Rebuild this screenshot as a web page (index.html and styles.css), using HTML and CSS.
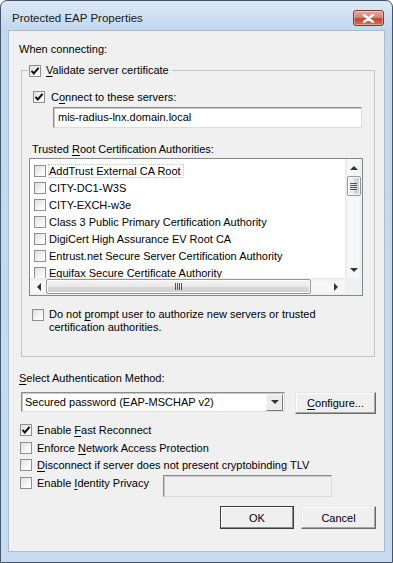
FILE: index.html
```html
<!DOCTYPE html>
<html lang="en">
<head>
  <meta charset="UTF-8" />
  <title>Protected EAP Properties</title>
  <link rel="stylesheet" href="styles.css">
</head>
<body>
  <div class="window">
    <div class="titlebar">
      <span class="title">Protected EAP Properties</span>
      <span class="close-btn">
        <svg width="13" height="9" viewBox="0 0 13 9"><path d="M2 1 L11 8 M11 1 L2 8" stroke="#fff" stroke-width="2.4" stroke-linecap="round"/></svg>
      </span>
    </div>

    <div class="client">
      <div class="line">When connecting:</div>

      <fieldset class="group">
        <legend class="group-legend">
          <span class="check"><svg width="10" height="10" viewBox="0 0 10 10"><path d="M1.5 4.8 L3.8 7.4 L8.6 1.8" fill="none" stroke="#111" stroke-width="2"/></svg></span>
          <span><u>V</u>alidate server certificate</span>
        </legend>

        <div class="opt connect">
          <span class="check"><svg width="10" height="10" viewBox="0 0 10 10"><path d="M1.5 4.8 L3.8 7.4 L8.6 1.8" fill="none" stroke="#111" stroke-width="2"/></svg></span>
          <span>C<u>o</u>nnect to these servers:</span>
        </div>
        <div class="textbox servers">mis-radius-lnx.domain.local</div>

        <div class="line trusted">Trusted <u>R</u>oot Certification Authorities:</div>
        <div class="listbox">
          <div class="items">
            <div class="item"><span class="check"></span><span class="item-focus">AddTrust External CA Root</span></div>
            <div class="item"><span class="check"></span>CITY-DC1-W3S</div>
            <div class="item"><span class="check"></span>CITY-EXCH-w3e</div>
            <div class="item"><span class="check"></span>Class 3 Public Primary Certification Authority</div>
            <div class="item"><span class="check"></span>DigiCert High Assurance EV Root CA</div>
            <div class="item"><span class="check"></span>Entrust.net Secure Server Certification Authority</div>
            <div class="item"><span class="check"></span>Equifax Secure Certificate Authority</div>
          </div>
          <div class="vscroll">
            <span class="arrow up"></span>
            <span class="thumb vthumb"><span class="grip"></span></span>
            <span class="arrow down"></span>
          </div>
          <div class="hscroll">
            <span class="arrow left"></span>
            <span class="thumb hthumb"><span class="grip"></span></span>
            <span class="arrow right"></span>
          </div>
          <div class="corner"></div>
        </div>

        <div class="opt prompt">
          <span class="check"></span>
          <span>Do not <u>p</u>rompt user to authorize new servers or trusted<br>certification authorities.</span>
        </div>
      </fieldset>

      <div class="line method"><u>S</u>elect Authentication Method:</div>
      <div class="method-row">
        <div class="combo">
          <span>Secured password (EAP-MSCHAP v2)</span>
          <span class="combo-btn"><span class="arrow down"></span></span>
        </div>
        <div class="btn configure"><u>C</u>onfigure...</div>
      </div>

      <div class="options">
        <div class="opt">
          <span class="check"><svg width="10" height="10" viewBox="0 0 10 10"><path d="M1.5 4.8 L3.8 7.4 L8.6 1.8" fill="none" stroke="#111" stroke-width="2"/></svg></span>
          <span>Enable <u>F</u>ast Reconnect</span>
        </div>
        <div class="opt">
          <span class="check"></span>
          <span>Enforce <u>N</u>etwork Access Protection</span>
        </div>
        <div class="opt">
          <span class="check"></span>
          <span><u>D</u>isconnect if server does not present cryptobinding TLV</span>
        </div>
        <div class="identity-row">
          <div class="opt identity">
            <span class="check"></span>
            <span>Enable <u>I</u>dentity Privacy</span>
          </div>
          <div class="textbox disabled"></div>
        </div>
      </div>

      <div class="buttons">
        <div class="btn ok">OK</div>
        <div class="btn">Cancel</div>
      </div>
    </div>
  </div>
</body>
</html>
```

FILE: styles.css
```css
* {
  box-sizing: border-box;
}

body {
  margin: 0;
  font-family: "Liberation Sans", Arial, sans-serif;
  font-size: 11px;
  color: #000;
  background: #fff;
}

u {
  text-decoration-thickness: 1px;
  text-underline-offset: 2px;
}

.window {
  width: 393px;
  height: 563px;
  border: 1px solid #43566c;
  border-radius: 7px 7px 0 0;
  background: linear-gradient(#dce8f5, #c3d8ee 28px, #c6dbf0);
  display: flex;
  flex-direction: column;
}

.titlebar {
  height: 29px;
  display: flex;
  align-items: flex-start;
  justify-content: space-between;
  padding: 0 8px 0 11px;
}

.title {
  margin-top: 10px;
  line-height: 15px;
  font-size: 11.5px;
  color: #1a1a1a;
}

.close-btn {
  margin-top: 9px;
  width: 31px;
  height: 16px;
  border: 1px solid #7d3b32;
  border-radius: 3px;
  background: linear-gradient(#e9a99a, #d98270 45%, #c4452f 55%, #d86f55);
  box-shadow: inset 0 0 0 1px rgba(255,255,255,0.35);
  display: flex;
  align-items: center;
  justify-content: center;
}

.client {
  flex: 1;
  margin: 0 7px 10px 7px;
  background: #f0f0f0;
  border: 1px solid #a8bbd0;
  padding: 11px 0 0 10px;
}

.line {
  line-height: 14px;
  height: 14px;
  white-space: nowrap;
}

/* checkboxes */
.check {
  width: 12px;
  height: 12px;
  flex: none;
  border: 1px solid #8e8f8f;
  background: linear-gradient(135deg, #dedede, #f6f6f6 60%, #fff);
  display: inline-flex;
  align-items: center;
  justify-content: center;
}

.opt {
  display: flex;
  align-items: center;
  gap: 5px;
  height: 14px;
  line-height: 14px;
  white-space: nowrap;
}

/* group box */
.group {
  margin: 8px 0 0 2px;
  width: 354px;
  border: 1px solid #c3c3c3;
  padding: 0 0 22px 7px;
}

.group-legend {
  display: flex;
  align-items: center;
  gap: 5px;
  height: 13px;
  line-height: 13px;
  padding: 0 3px 0 0;
  white-space: nowrap;
}

.connect {
  margin: 13px 0 0 4px;
  gap: 6px;
}

.textbox {
  background: #fff;
  border: 1px solid;
  border-color: #8c8c8c #dcdcdc #dcdcdc #8c8c8c;
  box-shadow: inset 1px 1px #c8c8c8;
}

.servers {
  margin: 3px 0 0 24px;
  width: 309px;
  height: 21px;
  line-height: 19px;
  padding-left: 4px;
}

.trusted {
  margin: 14px 0 0 3px;
}

/* list with scrollbars */
.listbox {
  margin-top: 2px;
  width: 334px;
  height: 138px;
  border: 1px solid #828790;
  background: #fff;
  display: grid;
  grid-template-columns: 1fr 17px;
  grid-template-rows: 1fr 17px;
}

.items {
  overflow: hidden;
  padding: 3px 0 0 4px;
}

.item {
  height: 17px;
  display: flex;
  align-items: center;
  gap: 3px;
  white-space: nowrap;
}

.item-focus {
  outline: 1px dotted #c8c8c8;
  outline-offset: 0;
  padding-right: 2px;
}

.vscroll {
  background: linear-gradient(90deg, #e8e8e8, #f7f7f7 20%, #f7f7f7 80%, #ececec);
  display: flex;
  flex-direction: column;
  align-items: center;
}

.hscroll {
  background: linear-gradient(#e8e8e8, #f7f7f7 20%, #f7f7f7 80%, #ececec);
  display: flex;
  align-items: center;
}

.corner {
  background: #f0f0f0;
}

.arrow {
  width: 0;
  height: 0;
  border: 4px solid transparent;
  flex: none;
}

.arrow.up {
  border-bottom: 4px solid #333;
  border-top: 0;
  margin-top: 7px;
}

.arrow.down {
  border-top: 4px solid #333;
  border-bottom: 0;
}

.vscroll .arrow.down {
  margin-top: auto;
  margin-bottom: 6px;
}

.arrow.left {
  border-right: 4px solid #333;
  border-left: 0;
  margin-left: 7px;
}

.arrow.right {
  border-left: 4px solid #333;
  border-right: 0;
  margin-left: auto;
  margin-right: 7px;
}

.thumb {
  border: 1px solid #989898;
  border-radius: 2px;
  background: linear-gradient(90deg, #f4f4f4, #e8e8e8 50%, #d8d8d8 51%, #cfcfcf);
  box-shadow: inset 0 0 0 1px #fbfbfb;
  display: flex;
  align-items: center;
  justify-content: center;
}

.vthumb {
  width: 14px;
  height: 20px;
  margin-top: 6px;
}

.hthumb {
  height: 15px;
  width: 265px;
  margin-left: 5px;
  background: linear-gradient(#f4f4f4, #e8e8e8 50%, #d8d8d8 51%, #cfcfcf);
}

.vthumb .grip {
  width: 7px;
  height: 7px;
  background: repeating-linear-gradient(#555 0 1px, transparent 1px 2px);
}

.hthumb .grip {
  width: 7px;
  height: 7px;
  background: repeating-linear-gradient(90deg, #555 0 1px, transparent 1px 2px);
}

.prompt {
  margin: 12px 0 0 3px;
  align-items: flex-start;
  height: 26px;
  line-height: 13px;
}

.prompt .check {
  margin-top: 1px;
}

/* authentication method */
.method {
  margin-top: 14px;
}

.method-row {
  margin: 7px 0 0 2px;
  display: flex;
  align-items: flex-start;
  gap: 10px;
}

.combo {
  width: 264px;
  height: 20px;
  background: #fff;
  border: 1px solid;
  border-color: #8c8c8c #dcdcdc #dcdcdc #8c8c8c;
  box-shadow: inset 1px 1px #c8c8c8;
  display: flex;
  align-items: center;
  justify-content: space-between;
  padding: 0 1px 0 3px;
}

.combo-btn {
  width: 17px;
  height: 17px;
  border: 1px solid;
  border-color: #f8f8f8 #7a7a7a #7a7a7a #f8f8f8;
  background: #ececec;
  display: flex;
  align-items: center;
  justify-content: center;
}

.btn {
  height: 22px;
  width: 81px;
  border: 1px solid;
  border-color: #e6e6e6 #6b6b6b #6b6b6b #e6e6e6;
  box-shadow: inset -1px -1px #a5a5a5, inset 1px 1px #fff;
  background: #efefef;
  display: flex;
  align-items: center;
  justify-content: center;
}

.options {
  margin-top: 7px;
  padding-left: 1px;
}

.options .opt {
  height: 17.7px;
}

.identity-row {
  display: flex;
  align-items: flex-start;
}

.identity {
  width: 143px;
}

.disabled {
  margin-top: 1px;
  width: 169px;
  height: 22px;
  background: #f0f0f0;
}

.buttons {
  margin-top: 9px;
  padding-right: 8px;
  display: flex;
  justify-content: flex-end;
  gap: 7px;
}

.buttons .btn {
  width: 75px;
  height: 23px;
}

.btn.ok {
  width: 74px;
  border-color: #3c3c3c;
  box-shadow: inset -1px -1px #8a8a8a, inset 1px 1px #fff;
}
```
